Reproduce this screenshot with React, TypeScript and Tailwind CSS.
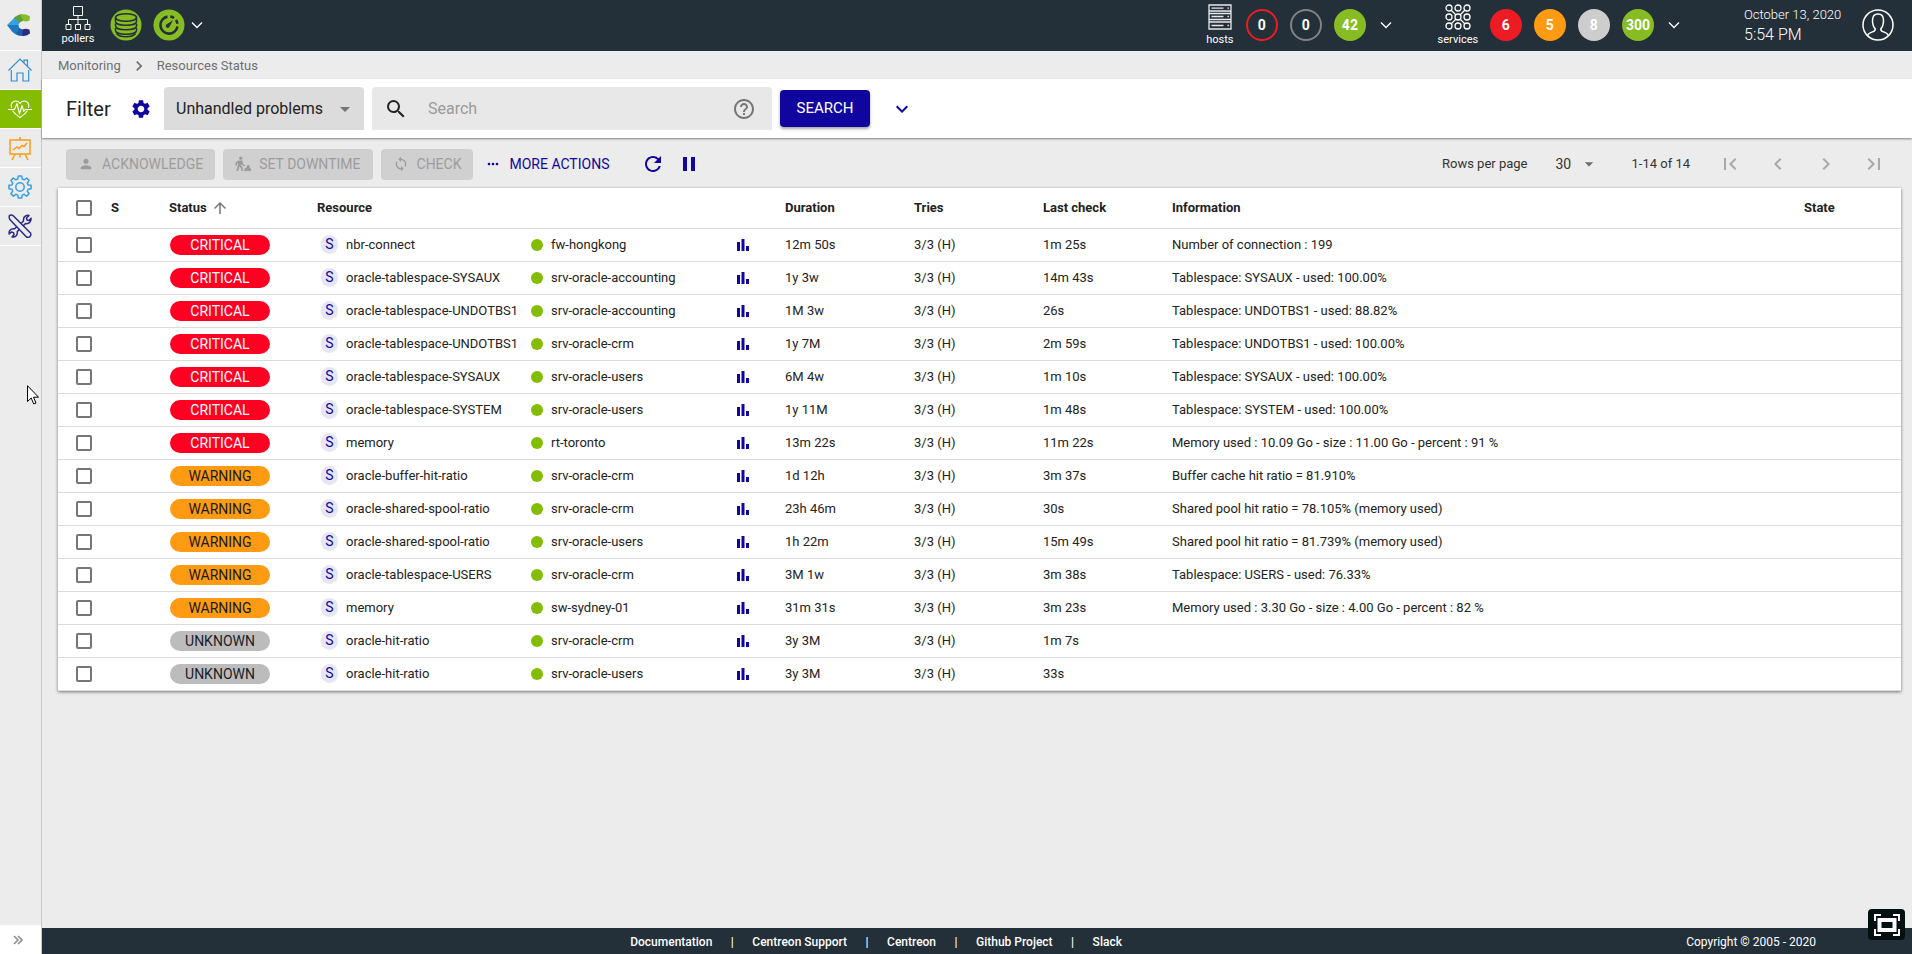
import type { ReactNode } from "react";
import clsx from "clsx";
import {
  MdArrowDropDown,
  MdArrowUpward,
  MdChevronLeft,
  MdChevronRight,
  MdExpandMore,
  MdFirstPage,
  MdHelpOutline,
  MdLastPage,
  MdMoreHoriz,
  MdPause,
  MdPerson,
  MdRefresh,
  MdSearch,
  MdSettings,
  MdSync,
} from "react-icons/md";

type Status = "CRITICAL" | "WARNING" | "UNKNOWN";

const STATUS_STYLE: Record<Status, string> = {
  CRITICAL: "bg-[#ff0023] text-white",
  WARNING: "bg-[#ff9a13] text-[#1a1a1a]",
  UNKNOWN: "bg-[#bcbcbc] text-[#1c1c28]",
};

const ROWS: { status: Status; name: string; host: string; duration: string; last: string; info: string }[] = [
  { status: "CRITICAL", name: "nbr-connect", host: "fw-hongkong", duration: "12m 50s", last: "1m 25s", info: "Number of connection : 199" },
  { status: "CRITICAL", name: "oracle-tablespace-SYSAUX", host: "srv-oracle-accounting", duration: "1y 3w", last: "14m 43s", info: "Tablespace: SYSAUX - used: 100.00%" },
  { status: "CRITICAL", name: "oracle-tablespace-UNDOTBS1", host: "srv-oracle-accounting", duration: "1M 3w", last: "26s", info: "Tablespace: UNDOTBS1 - used: 88.82%" },
  { status: "CRITICAL", name: "oracle-tablespace-UNDOTBS1", host: "srv-oracle-crm", duration: "1y 7M", last: "2m 59s", info: "Tablespace: UNDOTBS1 - used: 100.00%" },
  { status: "CRITICAL", name: "oracle-tablespace-SYSAUX", host: "srv-oracle-users", duration: "6M 4w", last: "1m 10s", info: "Tablespace: SYSAUX - used: 100.00%" },
  { status: "CRITICAL", name: "oracle-tablespace-SYSTEM", host: "srv-oracle-users", duration: "1y 11M", last: "1m 48s", info: "Tablespace: SYSTEM - used: 100.00%" },
  { status: "CRITICAL", name: "memory", host: "rt-toronto", duration: "13m 22s", last: "11m 22s", info: "Memory used : 10.09 Go - size : 11.00 Go - percent : 91 %" },
  { status: "WARNING", name: "oracle-buffer-hit-ratio", host: "srv-oracle-crm", duration: "1d 12h", last: "3m 37s", info: "Buffer cache hit ratio = 81.910%" },
  { status: "WARNING", name: "oracle-shared-spool-ratio", host: "srv-oracle-crm", duration: "23h 46m", last: "30s", info: "Shared pool hit ratio = 78.105% (memory used)" },
  { status: "WARNING", name: "oracle-shared-spool-ratio", host: "srv-oracle-users", duration: "1h 22m", last: "15m 49s", info: "Shared pool hit ratio = 81.739% (memory used)" },
  { status: "WARNING", name: "oracle-tablespace-USERS", host: "srv-oracle-crm", duration: "3M 1w", last: "3m 38s", info: "Tablespace: USERS - used: 76.33%" },
  { status: "WARNING", name: "memory", host: "sw-sydney-01", duration: "31m 31s", last: "3m 23s", info: "Memory used : 3.30 Go - size : 4.00 Go - percent : 82 %" },
  { status: "UNKNOWN", name: "oracle-hit-ratio", host: "srv-oracle-crm", duration: "3y 3M", last: "1m 7s", info: "" },
  { status: "UNKNOWN", name: "oracle-hit-ratio", host: "srv-oracle-users", duration: "3y 3M", last: "33s", info: "" },
];

const FOOTER_LINKS = ["Documentation", "Centreon Support", "Centreon", "Github Project", "Slack"];

/* ---- Sidebar drawings ---- */

function Logo() {
  return (
    <svg viewBox="0 0 24 24" className="h-6 w-6">
      <path d="M0 12 8.500 3.500 13 9.500Q11.500 10.500 11.500 12.500Z" fill="#35a3e0" />
      <path d="M0 12 11.500 12Q11.500 14.500 13 15.500L12 22.500Q8 22 5 18.500Z" fill="#1f78c1" />
      <path d="M7 5Q10.500 1.500 15 1.300L16.500 8Q14 8 12.500 9.800Z" fill="#5b9e3c" />
      <path d="M13 1.500Q19 .5 23 3.500L22.500 7.500Q19.500 9 16.500 8Z" fill="#86bc25" />
      <path d="M12.500 15Q14.500 17 17 16.300L16.500 23Q11.500 23.500 9 21Z" fill="#1c5fa8" />
      <path d="M15.500 16.500Q19 15 22.500 16.800L23 20.500Q19.500 23.500 15.500 22.800Z" fill="#2b2a85" />
    </svg>
  );
}

function HomeIcon() {
  return (
    <svg viewBox="0 0 24 24" fill="none" stroke="#2f8fd6" strokeWidth="1.2" className="h-6 w-6">
      <path d="M.5 12.500 12 1l11.500 11.500M3.300 12v11h5.700v-8h6v8h5.700V12M16 4.500V2.200h3.500V8" />
    </svg>
  );
}

function HeartIcon() {
  return (
    <svg viewBox="0 0 24 24" fill="none" stroke="#fff" strokeWidth="1.100" strokeLinejoin="round" className="h-6 w-6">
      <path d="M3.500 11C2 6.500 5 4 7.600 4 9.800 4 11.300 5 12 6.600 12.700 5 14.200 4 16.400 4 19 4 22 6.500 20.500 11M4.500 13.500C6 16 9 18.500 12 20.500c3-2 6-4.500 7.500-7" />
      <path d="M0 12.500h6.500L9 6.500l2.500 10.500L14 8.500l1.800 6 1.200-2h7" />
    </svg>
  );
}

function BoardIcon() {
  return (
    <svg viewBox="0 0 24 24" fill="none" stroke="#ff9a13" strokeWidth="1.500" className="h-6 w-6">
      <path d="M2 4h20v14H2zM12 1v3M7 18l-3 6M17 18l3 6M12 18v3.500" />
      <path d="M5 14l4-3 2 1.500 3-3 2 1 3-3.500" />
    </svg>
  );
}

function CogIcon() {
  return (
    <svg viewBox="0 0 24 24" fill="none" stroke="#3a9fe5" strokeWidth="1.500" strokeLinejoin="round" className="h-6 w-6">
      <path d="M10.300 1h3.400l.5 3 2 .8 2.500-1.800 2.400 2.400-1.800 2.500.8 2 3 .4v3.400l-3 .5-.8 2 1.800 2.500-2.400 2.400-2.500-1.800-2 .8-.5 2.900h-3.400l-.5-2.900-2-.8-2.500 1.800-2.400-2.400 1.800-2.500-.8-2-3-.5v-3.400l3-.4.8-2-1.800-2.500 2.400-2.400 2.500 1.800 2-.8z" />
      <circle cx="12" cy="12" r="4.200" />
    </svg>
  );
}

function ToolsIcon() {
  return (
    <svg viewBox="0 0 24 24" fill="none" stroke="#2b2a85" strokeWidth="1.500" strokeLinejoin="round" className="h-6 w-6">
      <path d="M1.500 1.500Q3.500.2 5.500 2L22.500 19q1 2-.5 3.500T18.500 23L1.800 5.500Q.8 3 1.500 1.500Z" />
      <path d="M13 9.500l2.500-2.500Q15 3.500 17.500 2q1.500-1 3.500-.6L18.500 4l.5 2 2.200.5L23 4.200q.3 2.800-1.500 4.500-1.800 1.400-4 .8L15 12" />
      <path d="M9 12.500l-2.300 2.300Q3.800 14.300 2.200 16q-1.500 1.700-1 4L3.500 18l2 .6.6 2L4 23q2.600.4 4.200-1.200 1.500-1.700 1-4L11.500 15" />
    </svg>
  );
}

/* ---- Top bar drawings ---- */

function PollersIcon() {
  return (
    <svg viewBox="0 0 26 26" fill="none" stroke="#fff" strokeWidth="1" className="h-[26px] w-[26px]">
      <path d="M8.500 1.500h9v9h-9zM13 10.500v9M3.500 19.500v-5h19v5M1 19.500h5v5H1zM10.500 19.500h5v5h-5zM20 19.500h5v5h-5z" />
    </svg>
  );
}

function HostsIcon() {
  return (
    <svg viewBox="0 0 24 26" fill="none" stroke="#e8e8ec" strokeWidth="1.300" className="h-[26px] w-6">
      <path d="M1 1h22v24H1zM1 7h22M1 9.500h22M1 15.500h22M1 18h22M3.500 4.200h12M3.500 12.500h12M3.500 21.500h12M19.500 4.200h1.500M19.500 12.500h1.500M19.500 21.500h1.500" />
    </svg>
  );
}

function ServicesIcon() {
  return (
    <svg viewBox="0 0 26 26" fill="none" stroke="#fff" strokeWidth="1.300" className="h-[26px] w-[26px]">
      {[4, 13, 22].map((y) => [4, 13, 22].map((x) => <circle key={`${x}-${y}`} cx={x} cy={y} r="3" />))}
      <path d="M6 6l5 5M20 6l-5 5M6 20l5-5M20 20l-5-5" />
    </svg>
  );
}

function DatabaseIcon() {
  return (
    <svg viewBox="0 0 32 32" fill="none" stroke="#232f39" strokeWidth="1.500" className="h-8 w-8">
      <circle cx="16" cy="16" r="15.500" fill="#87bd23" stroke="none" />
      <ellipse cx="16" cy="8.500" rx="10.500" ry="3.800" />
      <path d="M5.500 8.500v4c0 2.200 4.500 3.800 10.500 3.800s10.500-1.600 10.500-3.800v-4" />
      <path d="M5.500 14.500v2.500c0 2.200 4.500 3.800 10.500 3.800s10.500-1.600 10.500-3.800v-2.500" />
      <path d="M5.500 19v2.500c0 2.200 4.500 3.800 10.500 3.800s10.500-1.600 10.500-3.800V19" />
      <path d="M6.500 24.500c1.500 2 5 3.200 9.500 3.200s8-1.200 9.500-3.200" />
    </svg>
  );
}

function LatencyIcon() {
  return (
    <svg viewBox="0 0 32 32" fill="none" stroke="#232f39" className="h-8 w-8">
      <circle cx="16" cy="16" r="15.500" fill="#87bd23" stroke="none" />
      <path d="M14.500 7.600a8.600 8.600 0 1 0 10 9.900" strokeWidth="2.600" />
      <path d="M17.300 7.500a8.600 8.600 0 0 1 3.700 1.500M23 11a8.600 8.600 0 0 1 1.500 3.800" strokeWidth="2.600" />
      <path d="M13.300 15.500 20 11.200l-3.800 7a1.900 1.900 0 1 1-2.900-2.700z" fill="#232f39" stroke="none" />
    </svg>
  );
}

function ProfileIcon() {
  return (
    <svg viewBox="0 0 32 32" fill="none" stroke="#fff" strokeWidth="1.500" className="h-8 w-8">
      <circle cx="16" cy="16" r="15" />
      <path d="M5.500 26.500c1-2.300 3-3 5-3.600 2-.6 3-1.500 2.700-3.200-2-2-2.700-5-2.700-8.200 0-4 2.200-6.500 5.500-6.500s5.500 2.500 5.500 6.500c0 3.200-.7 6.200-2.700 8.200-.3 1.700.7 2.600 2.700 3.200 2 .6 4 1.300 5 3.600" />
    </svg>
  );
}

function TopChevron() {
  return (
    <button aria-label="Expand" className="grid h-8 w-10 place-items-center">
      <svg viewBox="0 0 12 8" fill="none" stroke="#fff" strokeWidth="1.300" className="h-2 w-3">
        <path d="M1 1.500l5 5 5-5" />
      </svg>
    </button>
  );
}

function Counter({ value, className }: { value: number; className: string }) {
  return (
    <button className={clsx("grid h-8 min-w-8 place-items-center rounded-full px-1 text-sm font-bold text-white", className)}>
      {value}
    </button>
  );
}

/* ---- Listing drawings ---- */

function DowntimeIcon() {
  return (
    <svg viewBox="0 0 18 18" fill="currentColor" className="h-4 w-4">
      <circle cx="6.500" cy="2.500" r="1.800" />
      <path d="M3.500 5h4.800l1 4.200 2 1.300-.6 1.200-2.700-1.600-.5-1.300-.5 2.200 1.800 2V17H7v-3.200l-2-2L3.600 17H1.500l1.700-6.500V7.500L2.200 8.500V11H.5V7.500zM9.500 17l2-3.500 1.500-.5 1-3h2l.5 3 1.500 1.500V17z" />
    </svg>
  );
}

function GraphIcon() {
  return (
    <svg viewBox="0 0 12 12" fill="#10069f" className="h-3 w-3">
      <path d="M0 3h3v9H0zM4.500 0h3v12h-3zM9 7h3v5H9z" />
    </svg>
  );
}

function ActionButton({ icon, children }: { icon: ReactNode; children: ReactNode }) {
  return (
    <button disabled className="flex h-[31px] items-center gap-2 rounded bg-[#d0d0d0] px-3 text-[14px] text-[#9c9c9c]">
      {icon}
      {children}
    </button>
  );
}

function Check({ label }: { label: string }) {
  return (
    <input type="checkbox" aria-label={label} className="block h-4 w-4 appearance-none rounded-xs border-2 border-[#767676] bg-white" />
  );
}

function Sidebar() {
  const items = [
    { label: "Home", icon: <HomeIcon /> },
    { label: "Monitoring", icon: <HeartIcon />, active: true },
    { label: "Reporting", icon: <BoardIcon /> },
    { label: "Configuration", icon: <CogIcon /> },
    { label: "Administration", icon: <ToolsIcon /> },
  ];
  return (
    <aside className="flex w-[42px] shrink-0 flex-col border-r border-[#c8c8c8] bg-[#ececec]">
      <a href="#" aria-label="Centreon" className="flex h-[51px] items-center justify-center border-b border-white pr-1">
        <Logo />
      </a>
      <nav>
        {items.map((it) => (
          <a
            key={it.label}
            href="#"
            aria-label={it.label}
            className={clsx("flex h-[39px] items-center justify-center border-b border-white pr-px", it.active && "bg-[#84bd00]")}
          >
            {it.icon}
          </a>
        ))}
      </nav>
      <button aria-label="Expand menu" className="mt-auto grid h-[29px] place-items-center bg-white pr-1.5">
        <svg viewBox="0 0 10 10" fill="none" stroke="#8f8f8f" strokeWidth="1.600" className="h-[10px] w-[10px]">
          <path d="M1 1l4 4-4 4M5 1l4 4-4 4" />
        </svg>
      </button>
    </aside>
  );
}

function TopBar() {
  return (
    <header className="flex h-[51px] items-center bg-[#232f39] pr-[18px] pb-0.5 pl-5 text-white">
      <div className="flex w-8 flex-col items-center gap-0.5 text-[11px] leading-3">
        <PollersIcon />
        pollers
      </div>
      <div className="ml-4 flex items-center gap-[11px]">
        <DatabaseIcon />
        <LatencyIcon />
      </div>
      <div className="-ml-2">
        <TopChevron />
      </div>

      <div className="ml-auto flex items-center">
        <div className="flex w-8 flex-col items-center gap-1 text-[11px] leading-3">
          <HostsIcon />
          hosts
        </div>
        <div className="ml-2.5 flex gap-3">
          <Counter value={0} className="border-2 border-[#ed1c24]" />
          <Counter value={0} className="border-2 border-[#818285]" />
          <Counter value={42} className="bg-[#87bd23]" />
        </div>
        <TopChevron />
      </div>
      <div className="ml-8 flex items-center">
        <div className="flex w-10 flex-col items-center gap-1 text-[11px] leading-3">
          <ServicesIcon />
          services
        </div>
        <div className="ml-3 flex gap-3">
          <Counter value={6} className="bg-[#ed1c24]" />
          <Counter value={5} className="bg-[#ff9a13]" />
          <Counter value={8} className="bg-[#cdcdcd]" />
          <Counter value={300} className="bg-[#87bd23]" />
        </div>
        <TopChevron />
      </div>
      <div className="ml-[50px] w-[98px] whitespace-nowrap">
        <p className="text-[13px] leading-5 font-light">October 13, 2020</p>
        <p className="text-base leading-5 font-light">5:54 PM</p>
      </div>
      <button aria-label="Profile" className="ml-5">
        <ProfileIcon />
      </button>
    </header>
  );
}

function FilterBar() {
  return (
    <form className="relative flex h-[59px] items-center bg-white pl-6 shadow-[0_1px_2px_rgba(0,0,0,0.45)]">
      <h1 className="w-[64px] text-[20px] leading-6 text-[#222]">Filter</h1>
      <button type="button" aria-label="Filter settings" className="text-[#10069f]">
        <MdSettings className="h-[22px] w-[22px]" />
      </button>
      <div className="relative ml-3 w-[200px]">
        <select aria-label="Filter" className="h-[43px] w-full appearance-none rounded-t bg-[#dcdcdc] pl-3 text-base text-[#222]">
          <option>Unhandled problems</option>
        </select>
        <MdArrowDropDown className="pointer-events-none absolute top-[10px] right-[7px] h-6 w-6 text-[#757575]" />
      </div>
      <label className="ml-2 flex h-[43px] w-[400px] items-center rounded-t bg-[#e8e8e8] px-3 text-[#222]">
        <MdSearch className="h-6 w-6 shrink-0" />
        <input placeholder="Search" className="ml-5 min-w-0 flex-1 bg-transparent text-base outline-none placeholder:text-[#9a9a9a]" />
        <MdHelpOutline className="mr-1 h-6 w-6 shrink-0 text-[#757575]" />
      </label>
      <button type="button" className="ml-2 h-[37px] w-[90px] rounded bg-[#10069f] text-[15px] text-white shadow-[0_2px_3px_rgba(0,0,0,0.35)]">
        SEARCH
      </button>
      <button type="button" aria-label="More criteria" className="ml-5 text-[#10069f]">
        <MdExpandMore className="h-6 w-6" />
      </button>
    </form>
  );
}

function ActionBar() {
  return (
    <div className="flex h-[50px] items-center pt-0.5 pr-3.5 pl-6">
      <div className="flex items-center gap-2">
        <ActionButton icon={<MdPerson className="h-4 w-4" />}>ACKNOWLEDGE</ActionButton>
        <ActionButton icon={<DowntimeIcon />}>SET DOWNTIME</ActionButton>
        <ActionButton icon={<MdSync className="h-4 w-4" />}>CHECK</ActionButton>
      </div>
      <button className="ml-3 flex items-center gap-2 text-[14px] text-[#10069f]">
        <MdMoreHoriz className="h-4 w-4" />
        MORE ACTIONS
      </button>
      <button aria-label="Refresh" className="ml-8 text-[#10069f]">
        <MdRefresh className="h-6 w-6" />
      </button>
      <button aria-label="Pause" className="ml-3 text-[#10069f]">
        <MdPause className="h-6 w-6" />
      </button>

      <div className="ml-auto flex items-center text-[#333]">
        <label htmlFor="rows" className="text-[13px]">Rows per page</label>
        <div className="relative ml-7 w-12">
          <select id="rows" className="w-full appearance-none bg-transparent text-[14px]">
            <option>30</option>
          </select>
          <MdArrowDropDown className="pointer-events-none absolute top-0.5 right-1 h-5 w-5 text-[#6b6b6b]" />
        </div>
        <p className="ml-7 text-[13px]">1-14 of 14</p>
        <div className="ml-4 flex text-[#a8a8a8]">
          <button aria-label="First page" className="grid h-12 w-12 place-items-center"><MdFirstPage className="h-6 w-6" /></button>
          <button aria-label="Previous page" className="grid h-12 w-12 place-items-center"><MdChevronLeft className="h-6 w-6" /></button>
          <button aria-label="Next page" className="grid h-12 w-12 place-items-center"><MdChevronRight className="h-6 w-6" /></button>
          <button aria-label="Last page" className="grid h-12 w-12 place-items-center"><MdLastPage className="h-6 w-6" /></button>
        </div>
      </div>
    </div>
  );
}

function Listing() {
  return (
    <table className="w-full table-fixed border-collapse bg-white text-left text-[13px] leading-5 whitespace-nowrap text-[#222] shadow-[0_1px_3px_rgba(0,0,0,0.5)]">
      <colgroup>
        <col className="w-[53px]" />
        <col className="w-[58px]" />
        <col className="w-[148px]" />
        <col className="w-[214px]" />
        <col className="w-[206px]" />
        <col className="w-12" />
        <col className="w-[129px]" />
        <col className="w-[129px]" />
        <col className="w-[129px]" />
        <col />
        <col className="w-[97px]" />
      </colgroup>
      <thead>
        <tr className="h-10 border-b border-[#dcdcdc]">
          <th className="pl-[18px]"><Check label="Select all" /></th>
          <th>S</th>
          <th>
            <button className="flex items-center gap-1 font-bold">
              Status <MdArrowUpward className="h-[18px] w-[18px] text-[#757575]" />
            </button>
          </th>
          <th>Resource</th>
          <th />
          <th />
          <th>Duration</th>
          <th>Tries</th>
          <th>Last check</th>
          <th>Information</th>
          <th>State</th>
        </tr>
      </thead>
      <tbody>
        {ROWS.map((r, i) => (
          <tr key={i} className="h-[33px] border-b border-[#dcdcdc]">
            <td className="pl-[18px]"><Check label={`Select ${r.name}`} /></td>
            <td />
            <td>
              <span className={clsx("ml-px block h-5 w-[100px] rounded-full text-center text-[14px] leading-5", STATUS_STYLE[r.status])}>
                {r.status}
              </span>
            </td>
            <td>
              <span className="flex items-center gap-2 pl-1">
                <span className="h-[19px] w-[17px] rounded-full bg-[#e7e6f5] text-center text-[14px] leading-[19px] text-[#10069f]">S</span>
                {r.name}
              </span>
            </td>
            <td>
              <span className="flex items-center gap-2">
                <span className="h-3 w-3 rounded-full bg-[#84bd00]" />
                {r.host}
              </span>
            </td>
            <td><button aria-label="Graph" className="block"><GraphIcon /></button></td>
            <td>{r.duration}</td>
            <td>3/3 (H)</td>
            <td>{r.last}</td>
            <td>{r.info}</td>
            <td />
          </tr>
        ))}
      </tbody>
    </table>
  );
}

function Footer() {
  return (
    <footer className="flex h-[26px] items-center bg-[#232f39] pt-0.5 pr-24 text-[12px] font-medium text-white">
      <div className="flex flex-1 justify-center pl-6">
        {FOOTER_LINKS.map((l, i) => (
          <span key={l} className="flex">
            {i > 0 && <span className="w-10 text-center">|</span>}
            <a href="#">{l}</a>
          </span>
        ))}
      </div>
      <p className="font-normal">Copyright © 2005 - 2020</p>
    </footer>
  );
}

export default function App() {
  return (
    <div className="relative flex min-h-screen bg-[#ececec] font-[Roboto,'Liberation_Sans',sans-serif]">
      <Sidebar />
      <div className="flex min-w-0 flex-1 flex-col">
        <TopBar />
        <nav className="flex h-7 items-center gap-2 pt-0.5 pl-4 text-[13px] text-[#707070]">
          <a href="#">Monitoring</a>
          <MdChevronRight className="h-5 w-5" />
          <a href="#">Resources Status</a>
        </nav>
        <FilterBar />
        <main className="flex-1">
          <ActionBar />
          <div className="pr-[11px] pl-4">
            <Listing />
          </div>
        </main>
        <Footer />
      </div>

      <button aria-label="Fullscreen" className="absolute right-[7px] bottom-[14px] grid h-[31px] w-[37px] place-items-center rounded bg-[#03100f]">
        <svg viewBox="0 0 26 22" fill="none" stroke="#fff" className="h-[22px] w-[26px]">
          <path d="M1 7V1h6M19 1h6v6M25 15v6h-6M7 21H1v-6" strokeWidth="2" />
          <path d="M5.500 6h15v10h-15z" strokeWidth="4" />
        </svg>
      </button>
      <svg viewBox="0 0 12 20" className="pointer-events-none absolute top-[385px] left-[27px] h-5 w-3">
        <path d="M.5.700v15.800l3.700-3.500 2.500 6 2.300-1-2.500-5.800h5z" fill="#fff" stroke="#000" />
      </svg>
    </div>
  );
}
